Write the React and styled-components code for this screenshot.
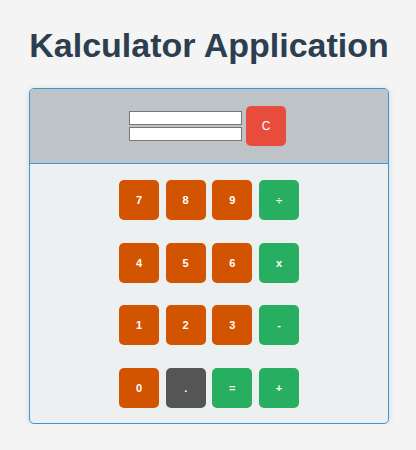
import styled, { createGlobalStyle } from "styled-components";

const GlobalStyle = createGlobalStyle`
  body {
    margin: 0;
    background: #f4f4f4;
    font-family: "Liberation Sans", Arial, sans-serif;
  }
`;

const rows = [
  [
    { label: "7", kind: "num" },
    { label: "8", kind: "num" },
    { label: "9", kind: "num" },
    { label: "÷", kind: "op" },
  ],
  [
    { label: "4", kind: "num" },
    { label: "5", kind: "num" },
    { label: "6", kind: "num" },
    { label: "x", kind: "op" },
  ],
  [
    { label: "1", kind: "num" },
    { label: "2", kind: "num" },
    { label: "3", kind: "num" },
    { label: "-", kind: "op" },
  ],
  [
    { label: "0", kind: "num" },
    { label: ".", kind: "dot" },
    { label: "=", kind: "op" },
    { label: "+", kind: "op" },
  ],
];

const colors = {
  num: "#d35400",
  op: "#27ae60",
  dot: "#555555",
  clear: "#e74c3c",
};

export default function App() {
  return (
    <Page>
      <GlobalStyle />
      <Title>Kalculator Application</Title>
      <Card>
        <Display>
          <Screens>
            <Screen type="text" readOnly />
            <Screen type="text" readOnly />
          </Screens>
          <Key $kind="clear">C</Key>
        </Display>
        <Pad>
          {rows.map((row, i) => (
            <Row key={i}>
              {row.map((k) => (
                <Key key={k.label} $kind={k.kind}>
                  {k.label}
                </Key>
              ))}
            </Row>
          ))}
        </Pad>
      </Card>
    </Page>
  );
}

const Page = styled.div`
  display: flex;
  flex-direction: column;
  align-items: center;
  padding: 26px 0 0 2px;
`;

const Title = styled.h1`
  margin: 0 0 23px;
  font-size: 34px;
  line-height: 39px;
  font-weight: 700;
  color: #2c3e50;
`;

const Card = styled.div`
  width: 360px;
  box-sizing: border-box;
  border: 1px solid #3498db;
  border-radius: 5px;
  overflow: hidden;
  background: #ecf0f1;
  box-shadow: 0 1px 6px rgba(0, 0, 0, 0.12);
`;

const Display = styled.div`
  display: flex;
  justify-content: center;
  align-items: center;
  gap: 4px;
  padding: 17px 3px 17px 0;
  background: #bdc3c7;
  border-bottom: 1px solid #3498db;
`;

const Screens = styled.div`
  display: flex;
  flex-direction: column;
  gap: 2px;
`;

const Screen = styled.input`
  width: 113px;
  height: 14px;
  box-sizing: border-box;
  padding: 0;
  border: 1px solid #767676;
  background: #fff;
  outline: none;
`;

const Pad = styled.div`
  display: flex;
  flex-direction: column;
  align-items: center;
  gap: 22.67px;
  padding: 16px 0 15px;
`;

const Row = styled.div`
  display: flex;
  gap: 6.67px;
`;

const Key = styled.button`
  width: 40px;
  height: 40px;
  border: none;
  border-radius: 5px;
  padding: 0;
  background: ${(p) => colors[p.$kind]};
  color: #fff;
  font-family: "Liberation Sans", Arial, sans-serif;
  font-size: ${(p) => (p.$kind === "clear" ? "12px" : "11px")};
  font-weight: ${(p) => (p.$kind === "clear" ? 400 : 700)};
  cursor: pointer;
`;
